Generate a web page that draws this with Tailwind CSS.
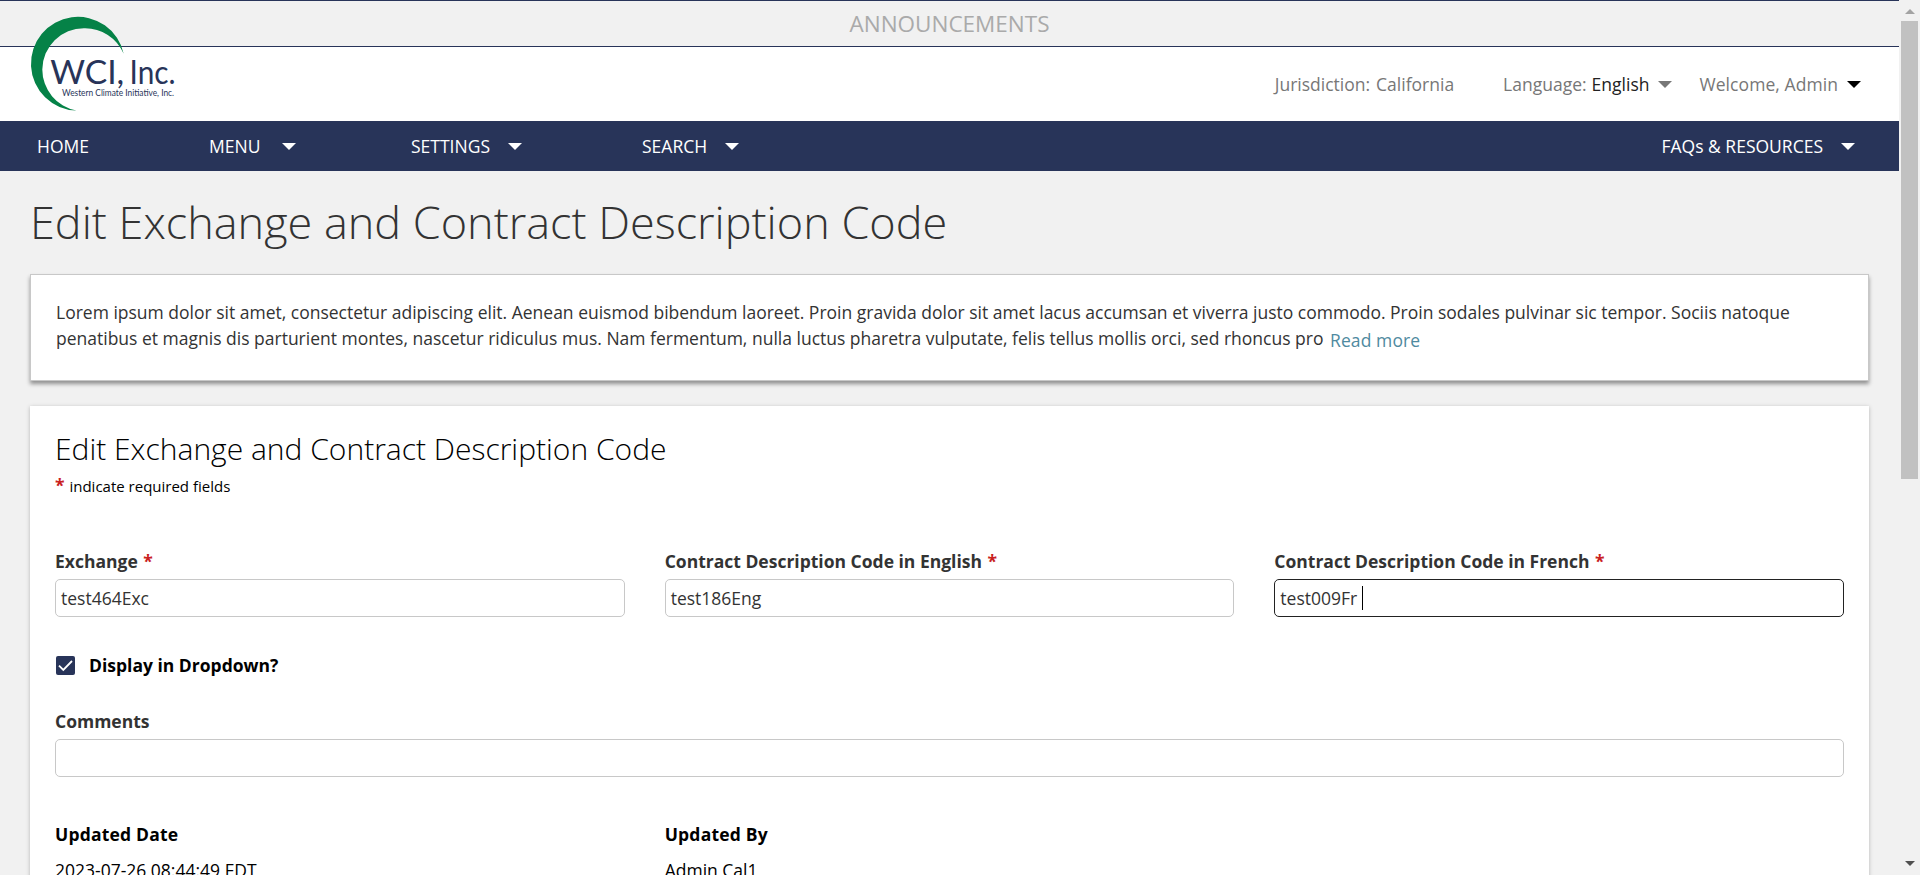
<!DOCTYPE html>
<html lang="en">
<head>
<meta charset="utf-8">
<title>Edit Exchange and Contract Description Code</title>
<script src="https://cdn.jsdelivr.net/npm/@tailwindcss/browser@4"></script>
</head>
<body class="flex h-[875px] w-[1920px] overflow-hidden bg-[#f1f1f1] font-['Open_Sans',sans-serif] text-[17.5px] leading-[26px] text-[#333]">
  <div class="flex h-full w-[1899px] flex-col">
    <div class="flex h-[47px] shrink-0 items-start justify-center border-y border-[#283459] pt-[7px] text-[22.5px] leading-[31px] text-[#aaa]">ANNOUNCEMENTS</div>

    <header class="relative flex h-[74px] shrink-0 items-start justify-end bg-white pt-6 pr-[38px] text-[#777]">
      <svg class="absolute top-[-37px] left-[20px]" width="165" height="110" viewBox="20 10 165 110" role="img" aria-label="WCI, Inc.">
        <path fill="#058247" d="M123.7 53.8A46.9 46.9 0 1 0 76.5 110.6A42 42 0 0 1 42.3 69.4A41.6 41.6 0 0 1 84 28.2A42 42 0 0 1 123.7 53.8Z"/>
        <g fill="#283459" font-family="Lato, sans-serif">
          <text x="50.2" y="83.5" font-size="32" textLength="74" lengthAdjust="spacingAndGlyphs">WCI,</text>
          <text x="129.6" y="83.5" font-size="32" textLength="46" lengthAdjust="spacingAndGlyphs">Inc.</text>
          <text x="62" y="96" font-size="8.6" textLength="112" lengthAdjust="spacingAndGlyphs">Western Climate Initiative, Inc.</text>
        </g>
      </svg>
      <div class="mr-[49px] flex gap-[6px]"><span>Jurisdiction:</span><span>California</span></div>
      <div class="mr-[27px] flex items-center">
        <span>Language:</span><span class="ml-[5px] text-[#222]">English</span>
        <svg class="ml-[9px]" width="14" height="7" viewBox="0 0 14 7"><path fill="#777" d="M0 0h14L7 7z"/></svg>
      </div>
      <div class="flex items-center">
        <span class="tracking-[0.07px]">Welcome, Admin</span>
        <svg class="ml-[9px]" width="14" height="7" viewBox="0 0 14 7"><path fill="#000" d="M0 0h14L7 7z"/></svg>
      </div>
    </header>

    <nav class="flex h-[50px] shrink-0 items-start bg-[#283459] pt-3 pr-[44px] pl-[37px] text-white">
      <a class="w-[172px]">HOME</a>
      <a class="flex w-[202px] items-center">MENU<svg class="ml-[22px]" width="14" height="7" viewBox="0 0 14 7"><path fill="#fff" d="M0 0h14L7 7z"/></svg></a>
      <a class="flex w-[231px] items-center">SETTINGS<svg class="ml-[18px]" width="14" height="7" viewBox="0 0 14 7"><path fill="#fff" d="M0 0h14L7 7z"/></svg></a>
      <a class="flex items-center">SEARCH<svg class="ml-[18px]" width="14" height="7" viewBox="0 0 14 7"><path fill="#fff" d="M0 0h14L7 7z"/></svg></a>
      <a class="ml-auto flex items-center">FAQs &amp; RESOURCES<svg class="ml-[18px]" width="14" height="7" viewBox="0 0 14 7"><path fill="#fff" d="M0 0h14L7 7z"/></svg></a>
    </nav>

    <main class="min-h-0 flex-1 overflow-hidden px-[30px] pt-[19px]">
      <h1 class="text-[45px] leading-[64px] font-light">Edit Exchange and Contract Description Code</h1>

      <section class="mt-[20px] h-[107px] border border-[#c8c8c8] bg-white px-[25px] pt-6 shadow-[0_3px_4px_rgba(0,0,0,0.4)]">
        <p>Lorem ipsum dolor sit amet, consectetur adipiscing elit. Aenean euismod bibendum laoreet. Proin gravida dolor sit amet lacus accumsan et viverra justo commodo. Proin sodales pulvinar sic tempor. Sociis natoque penatibus et magnis dis parturient montes, nascetur ridiculus mus. Nam fermentum, nulla luctus pharetra vulputate, felis tellus mollis orci, sed rhoncus pro <a class="ml-[2px] align-[-2px] leading-none tracking-[0.1px] text-[#4f8aa0]">Read more</a></p>
      </section>

      <section class="mt-[25px] h-[600px] bg-white px-[25px] pt-[22px] text-black shadow-[0_1px_4px_rgba(0,0,0,0.25)]">
        <h2 class="text-[30px] leading-[42px] font-light">Edit Exchange and Contract Description Code</h2>
        <p class="text-[15px] leading-[30px]"><span class="mr-px text-[17.5px] font-bold text-[#c9211e]">*</span> indicate required fields</p>

        <div class="mt-[45px] grid grid-cols-3 gap-10 text-[#333]">
          <div>
            <label class="block leading-[30px] font-bold">Exchange <span class="ml-px text-[#c9211e]">*</span></label>
            <div class="mt-[3px] flex h-[38px] items-center rounded-[5px] border border-[#c8c8c8] px-[5px]">test464Exc</div>
          </div>
          <div>
            <label class="block leading-[30px] font-bold">Contract Description Code in English <span class="ml-px text-[#c9211e]">*</span></label>
            <div class="mt-[3px] flex h-[38px] items-center rounded-[5px] border border-[#c8c8c8] px-[5px]">test186Eng</div>
          </div>
          <div>
            <label class="block leading-[30px] font-bold">Contract Description Code in French <span class="ml-px text-[#c9211e]">*</span></label>
            <div class="mt-[3px] flex h-[38px] items-center rounded-[5px] border border-[#222] px-[5px]">test009Fr<span class="ml-[5px] h-6 w-px bg-black"></span></div>
          </div>
        </div>

        <div class="mt-[34px] flex h-[28px] items-center gap-[14px] pl-px font-bold">
          <svg width="19" height="19" viewBox="0 0 19 19"><rect width="19" height="19" rx="2" fill="#283459"/><path d="M3 9.6l4.3 4.3L16 5" fill="none" stroke="#fff" stroke-width="1.8"/></svg>
          <span>Display in Dropdown?</span>
        </div>

        <label class="mt-[27px] block leading-[30px] font-bold text-[#333]">Comments</label>
        <div class="mt-[3px] h-[38px] rounded-[5px] border border-[#c8c8c8]"></div>

        <div class="mt-[42px] grid grid-cols-3 gap-10">
          <div><div class="leading-[30px] font-bold tracking-[0.2px]">Updated Date</div><div class="mt-[8px]">2023-07-26 08:44:49 EDT</div></div>
          <div><div class="leading-[30px] font-bold tracking-[0.2px]">Updated By</div><div class="mt-[8px]">Admin Cal1</div></div>
        </div>
      </section>
    </main>
  </div>

  <div class="flex h-full w-[21px] flex-col items-center justify-between bg-[#f1f1f1] pt-[9px] pr-0.5 pb-[9px] pl-[2px]">
    <svg class="shrink-0" width="10" height="5" viewBox="0 0 10 5"><path fill="#a3a3a3" d="M5 0l5 5H0z"/></svg>
    <div class="mt-[7px] mb-auto h-[458px] w-[17px] shrink-0 bg-[#c1c1c1]"></div>
    <svg class="shrink-0" width="10" height="5" viewBox="0 0 10 5"><path fill="#505050" d="M0 0h10L5 5z"/></svg>
  </div>
</body>
</html>
